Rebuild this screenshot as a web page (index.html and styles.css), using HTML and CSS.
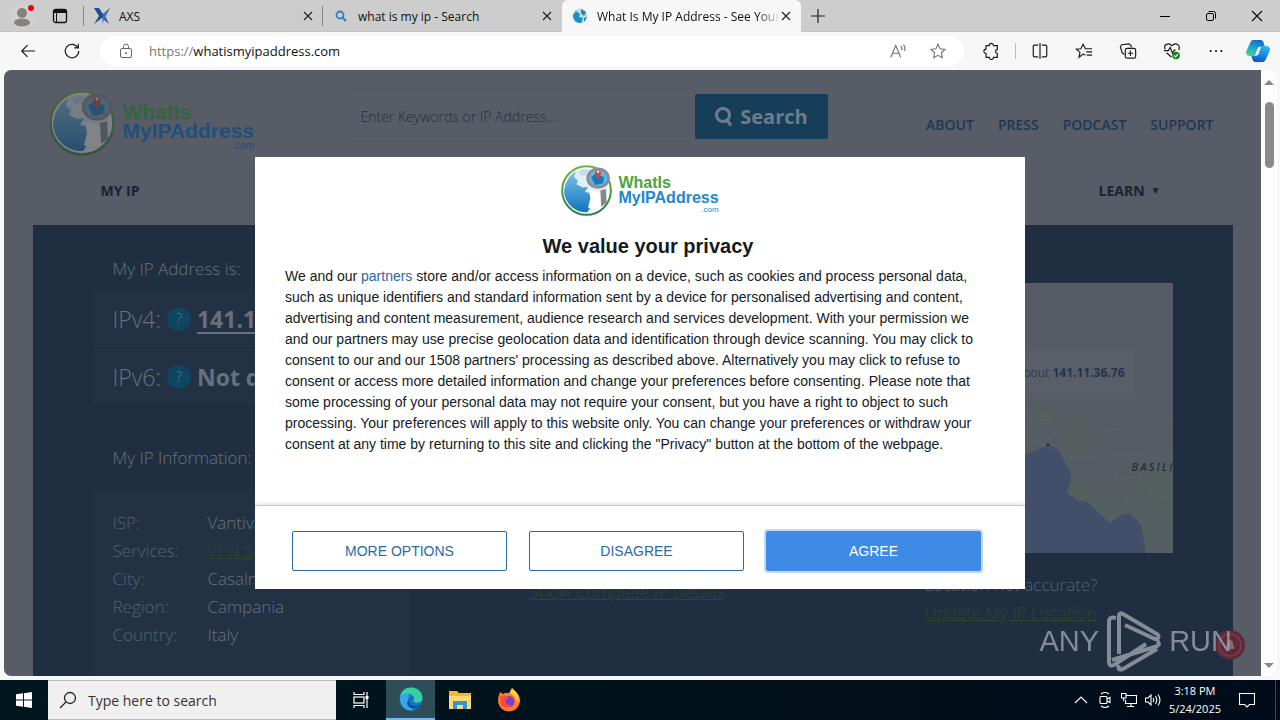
FILE: index.html
```
<!DOCTYPE html>
<html lang="en">
<head>
<meta charset="utf-8">
<title>What Is My IP Address</title>
<link rel="stylesheet" href="styles.css">
</head>
<body>
<svg class="defs" aria-hidden="true">
  <defs>
    <linearGradient id="sea" x1="0" y1="0" x2="0" y2="1"><stop offset="0" stop-color="#7cc4ec"/><stop offset="1" stop-color="#1272bd"/></linearGradient>
    <linearGradient id="ring" x1="0" y1="0" x2="0" y2="1"><stop offset="0" stop-color="#6cb83c"/><stop offset="1" stop-color="#2c8048"/></linearGradient>
    <symbol id="globe" viewBox="0 0 66 68">
      <circle cx="33" cy="34" r="31.5" fill="#fff" stroke="url(#ring)" stroke-width="2.6"/>
      <circle cx="32" cy="34" r="28" fill="#e2eff7"/>
      <path d="M6 25 12 15 19 9 17 17 22 21 20 26 28 30 35 29 31 36 36 37 42 41 38 50 38 56 34 62C17 63 4 49 4 34Z" fill="url(#sea)"/>
      <path d="M22 9 31 6 36 8 32 14 26 15Z" fill="#bddff0"/>
      <path d="M36 33 48 36 52 39 52 54 42 59 35 56 38 44Z" fill="#fff"/>
      <ellipse cx="48" cy="18" rx="13.5" ry="12" fill="#62b4e2" stroke="#8a8d94" stroke-width="3.5"/>
      <path d="M39 17 45 12 56 17 54 25 44 27Z" fill="#1a79bb"/>
      <path d="M48 20 44 12A4 4 0 1 1 52 12Z" fill="#dc4238"/><circle cx="48" cy="10" r="1.500" fill="#fff"/>
      <path d="M51 34 58 32 59 50 52 55Z" fill="#85878d"/>
    </symbol>
    <symbol id="close" viewBox="0 0 10 10"><path d="M1 1 9 9M9 1 1 9" fill="none" stroke="#222" stroke-width="1.200"/></symbol>
  </defs>
</svg>

<header class="tabstrip">
  <div class="tab-tools">
    <svg class="profile" viewBox="0 0 24 24"><circle cx="12" cy="12" r="12" fill="#d3d1cf"/><circle cx="12" cy="9" r="5" fill="#85817e"/><ellipse cx="12" cy="18.500" rx="8" ry="4" fill="#85817e"/><circle cx="21" cy="4" r="3" fill="#e30613"/></svg>
    <svg class="icon16" viewBox="0 0 16 16"><rect x="1.500" y="1.500" width="13" height="13" rx="2" fill="none" stroke="#111" stroke-width="1.300"/><path d="M1 2H15V5H1Z" fill="#111"/><path d="M4.500 4V14" stroke="#111"/></svg>
  </div>
  <div class="tab divided">
    <svg class="icon16" viewBox="0 0 16 16"><path d="M0 0H5L9 6 16 0 11 8 15 16 8 10 0 16 5 8Z" fill="#1d4f91"/><path d="M9 7 16 0 8 16Z" fill="#3b7cc4"/></svg>
    <span class="tab-title">AXS</span>
    <button class="tab-close" aria-label="Close tab"><svg viewBox="0 0 10 10"><use href="#close"/></svg></button>
  </div>
  <div class="tab">
    <svg class="icon16" viewBox="0 0 16 16"><circle cx="7" cy="7" r="3.500" fill="none" stroke="#2f7dc6" stroke-width="1.800"/><path d="M9.500 9.500 13 13" stroke="#2f7dc6" stroke-width="2"/></svg>
    <span class="tab-title">what is my ip - Search</span>
    <button class="tab-close" aria-label="Close tab"><svg viewBox="0 0 10 10"><use href="#close"/></svg></button>
  </div>
  <div class="tab active">
    <svg class="icon16" viewBox="0 0 16 16"><circle cx="8" cy="8" r="7.500" fill="#b9dced"/><path d="M1 7 4 3 8 6 7 9 11 10 9 15C4 15 1 12 1 7Z" fill="#1593c7"/><path d="M9 1 14 4 12 8 9 5ZM12 10 15 9 12 14Z" fill="#3a7b98"/></svg>
    <span class="tab-title fade">What Is My IP Address - See Your</span>
    <button class="tab-close" aria-label="Close tab"><svg viewBox="0 0 10 10"><use href="#close"/></svg></button>
  </div>
  <button class="new-tab" aria-label="New tab"><svg viewBox="0 0 14 14"><path d="M7 0V14M0 7H14" stroke="#222" stroke-width="1.200"/></svg></button>
  <div class="window-buttons">
    <button aria-label="Minimise"><svg viewBox="0 0 12 12"><path d="M1 6.500H11" stroke="#000"/></svg></button>
    <button aria-label="Restore"><svg viewBox="0 0 12 12" fill="none" stroke="#000"><rect x="1.500" y="3.500" width="7" height="7" rx="1.500"/><path d="M3.500 1.500H8.500Q10.500 1.500 10.500 3.500V8.500"/></svg></button>
    <button aria-label="Close"><svg viewBox="0 0 12 12"><path d="M1 1 11 11M11 1 1 11" stroke="#000" stroke-width="1.100"/></svg></button>
  </div>
</header>

<nav class="toolbar" aria-label="Browser toolbar">
  <button class="tool" aria-label="Back"><svg viewBox="0 0 20 20"><path d="M18 10H3M9.500 3.500 3 10 9.500 16.500"/></svg></button>
  <button class="tool" aria-label="Refresh"><svg viewBox="0 0 20 20"><path d="M16.300 6A7.500 7.500 0 1 0 17.500 10M17 2V6.500H12.500"/></svg></button>
  <div class="address">
    <svg class="lock" viewBox="0 0 16 16" fill="none" stroke="#666"><rect x="2.500" y="5.500" width="11" height="9" rx="1.500"/><path d="M5.500 5.500V3.500A2.500 2.500 0 0 1 10.500 3.500V5.500"/><circle cx="8" cy="10" r=".6" fill="#666"/></svg>
    <span class="url"><span class="scheme">https://</span>whatismyipaddress.com</span>
    <button class="tool grey" aria-label="Read aloud"><svg viewBox="0 0 20 20"><path d="M2 17 7.500 4 13 17M4 12.500H11M13 4Q15 6 14 9M16 3Q19 6 17 10"/></svg></button>
    <button class="tool grey" aria-label="Favourite"><svg viewBox="0 0 20 20"><path d="M10 2.500 12.300 7.500 17.700 8.200 13.800 12 14.700 17.400 10 14.800 5.300 17.400 6.200 12 2.300 8.200 7.700 7.500Z"/></svg></button>
  </div>
  <button class="tool" aria-label="Extensions"><svg viewBox="0 0 20 20"><path d="M4.500 4H8A2.400 2.400 0 0 1 12.800 4H17V8.500A2 2 0 0 0 17 12.500V17H12.800A2.400 2.400 0 0 1 8 17H4.500V12.800A2.400 2.400 0 0 1 4.500 8Z"/></svg></button>
  <span class="tool-divider"></span>
  <button class="tool" aria-label="Split screen"><svg viewBox="0 0 20 20"><path d="M8 3.500H4Q2.500 3.500 2.500 5V15Q2.500 16.500 4 16.500H8M12 3.500H16Q17.500 3.500 17.500 5V15Q17.500 16.500 16 16.500H12M10 1V19"/></svg></button>
  <button class="tool" aria-label="Favourites"><svg viewBox="0 0 20 20"><path d="M11.500 14.500 9 13.500 4.500 17 5.500 11.500 1.500 8 6.500 7.500 9 2.500 11.500 7.500H19M12.500 11H19M13 14.500H19"/></svg></button>
  <button class="tool" aria-label="Collections"><svg viewBox="0 0 20 20"><rect x="7" y="7" width="11.500" height="11" rx="2"/><path d="M12.700 9.500V15.500M9.700 12.500H15.700M6 14 3.500 12 1.500 5 3 3 11 2 13.500 4V6"/></svg></button>
  <button class="tool" aria-label="Browser essentials"><svg viewBox="0 0 20 20"><path d="M2.500 8C0 3 6 0 10 4 14 0 20 3 17.500 9M1 9.500H6L8 6 10.500 12.500 12.500 9H14M4 12 9.500 17"/><circle cx="14.500" cy="15" r="4.200" fill="#13801c" stroke="none"/><path d="M12.500 15 14 16.500 16.500 13.500" stroke="#fff"/></svg></button>
  <button class="tool" aria-label="Settings and more"><svg viewBox="0 0 20 20"><g fill="#111" stroke="none"><circle cx="4" cy="10" r="1.200"/><circle cx="10" cy="10" r="1.200"/><circle cx="16" cy="10" r="1.200"/></g></svg></button>
  <button class="tool copilot" aria-label="Copilot"><svg viewBox="0 0 24 24"><defs><linearGradient id="cp" x1=".6" y1="0" x2=".3" y2="1"><stop offset="0" stop-color="#1668c4"/><stop offset=".5" stop-color="#1fa9d0"/><stop offset="1" stop-color="#4bd07c"/></linearGradient><linearGradient id="cq" x1=".6" y1="0" x2=".4" y2="1"><stop offset="0" stop-color="#2fb3f0"/><stop offset=".6" stop-color="#1683e6"/><stop offset="1" stop-color="#1450c8"/></linearGradient></defs><path d="M7 1H15Q17 1 18 5L19 8H14Q12 8 11 11L9 17H4Q0 17 0 13L4 4Q5 1 7 1Z" fill="url(#cp)" stroke="none"/><path d="M17 23H9Q7 23 6 19L5.500 17H9Q12 17 13 13L15 7H20Q24 7 24 11L20 20Q19 23 17 23Z" fill="url(#cq)" stroke="none"/><path d="M12.500 8H15L12 16H9.500Z" fill="#eef8fc" stroke="none"/></svg></button>
</nav>

<div class="viewport">
  <div class="page">
    <div class="site">
      <div class="site-header">
        <div class="brand dim">
          <svg class="brand-globe" viewBox="0 0 66 68"><use href="#globe"/></svg>
          <div class="brand-text"><span class="green">WhatIs</span><span>MyIPAddress</span><small>.com</small></div>
        </div>
        <form class="search">
          <input type="text" aria-label="Keywords or IP address" placeholder="Enter Keywords or IP Address...">
          <button type="button"><svg viewBox="0 0 20 20"><circle cx="9" cy="8" r="6.500"/><path d="M12.500 12.500 17 18.500"/></svg>Search</button>
        </form>
        <nav class="site-links"><a href="#">ABOUT</a><a href="#">PRESS</a><a href="#">PODCAST</a><a href="#">SUPPORT</a></nav>
      </div>
      <nav class="menu"><a href="#">MY IP</a><span></span><a href="#">LEARN <i>▼</i></a></nav>
      <main class="hero">
        <section class="left">
          <h2>My IP Address is:</h2>
          <div class="ips">
            <div class="ip">IPv4: <span class="help">?</span> <a href="#">141.11.36.76</a></div>
            <div class="ip">IPv6: <span class="help">?</span> <b>Not detected</b></div>
          </div>
          <h2>My IP Information:</h2>
          <dl class="info">
            <dt>ISP:</dt><dd>Vantiva</dd>
            <dt>Services:</dt><dd><a href="#">VPN Server</a></dd>
            <dt>City:</dt><dd>Casalnuovo</dd>
            <dt>Region:</dt><dd>Campania</dd>
            <dt>Country:</dt><dd>Italy</dd>
          </dl>
        </section>
        <section class="middle"><a href="#">Show Complete IP Details</a></section>
        <section class="right">
          <div class="map">
            <svg viewBox="0 0 248 270" preserveAspectRatio="xMaxYMin slice">
              <defs><linearGradient id="land" x1="0" y1="0" x2="0" y2="1"><stop offset=".4" stop-color="#565b65"/><stop offset=".56" stop-color="#555d63"/><stop offset="1" stop-color="#535f60"/></linearGradient></defs>
              <rect width="248" height="270" fill="url(#land)"/>
              <path d="M100 131 110 125 121 127 130 133 124 142 104 140ZM143 136 156 134 168 146 160 168 146 178 138 165ZM210 188 226 192 240 186 248 196V240L236 226 224 206ZM144 200 158 204 170 218 184 238 160 222 142 212Z" fill="#54655a" opacity=".4"/>
              <path d="M70 170 100 172 122 163 132 165 145 188 146 198 142 210 154 218 162 219 185 240 197 232 205 230 216 242 221 270H60Z" fill="#414f6b"/>
              <path d="M100 155 116 160 127 166 145 174 161 172 188 188 205 225 222 250M132 165 147 148 168 138M161 172 176 150 206 142M145 174 220 172M190 128 202 123 220 133M230 125 248 140M185 200 225 190" fill="none" stroke="#5f5e69"/>
              <path d="M105 136 123 137 131 151 121 158M132 150 150 130M213 192 234 216 248 210" fill="none" stroke="#5a6563"/>
              <circle cx="123" cy="162" r="1.500" fill="#202936"/>
            </svg>
            <span class="region">BASILICATA</span>
            <div class="map-note">Click for more details about <b>141.11.36.76</b></div>
          </div>
          <p>Location not accurate?<br><a href="#">Update My IP Location</a></p>
        </section>
      </main>
    </div>
    <span class="alert-badge"><svg viewBox="0 0 32 32"><circle cx="16" cy="16" r="15" fill="#5c2a39"/><circle cx="16" cy="16" r="11" fill="none" stroke="#83394a" stroke-width="1.500"/><path d="M11 20Q13 17 13 14A3 3 0 0 1 19 14Q19 17 21 20Z" fill="#8f6470"/></svg></span>
    <div class="watermark"><span>ANY</span>
      <svg viewBox="0 0 54 62" fill="none"><path d="M12 44V6Q12 2 16 4L50 24Q53 27 50 29L48 29 18 15M5 50 51 36M51 36Q53 33 50 31M9 8Q2 6 2 12V52Q2 57 7 55L39 34M12 55Q10 61 16 59L50 39"/></svg>
      <span>RUN</span></div>
  </div>
  <div class="scrollbar"><i class="up"></i><i class="thumb"></i><i class="down"></i></div>

  <div class="overlay">
    <div class="dialog" role="dialog" aria-labelledby="privacy-title">
      <div class="brand small">
        <svg class="brand-globe" viewBox="0 0 66 68"><use href="#globe"/></svg>
        <div class="brand-text"><span class="green">WhatIs</span><span>MyIPAddress</span><small>.com</small></div>
      </div>
      <div class="dialog-body">
        <h1 id="privacy-title">We value your privacy</h1>
        <p>We and our <a href="#">partners</a> store and/or access information on a device, such as cookies and process personal data,<br>such as unique identifiers and standard information sent by a device for personalised advertising and content,<br>advertising and content measurement, audience research and services development. With your permission we<br>and our partners may use precise geolocation data and identification through device scanning. You may click to<br>consent to our and our 1508 partners' processing as described above. Alternatively you may click to refuse to<br>consent or access more detailed information and change your preferences before consenting. Please note that<br>some processing of your personal data may not require your consent, but you have a right to object to such<br>processing. Your preferences will apply to this website only. You can change your preferences or withdraw your<br>consent at any time by returning to this site and clicking the "Privacy" button at the bottom of the webpage.</p>
      </div>
      <div class="dialog-actions">
        <button>MORE OPTIONS</button><button>DISAGREE</button><button class="primary">AGREE</button>
      </div>
    </div>
  </div>
</div>

<footer class="taskbar">
  <button class="task start" aria-label="Start"><svg viewBox="0 0 16 16" fill="#fff"><path d="M0 2.300 7 1.300V7.600H0ZM8 1.200 16 0V7.600H8ZM0 8.400H7V14.700L0 13.700ZM8 8.400H16V16L8 14.800Z"/></svg></button>
  <label class="task-search"><svg viewBox="0 0 18 18" fill="none" stroke="#222" stroke-width="1.300"><circle cx="11" cy="7" r="5.500"/><path d="M7 11 1 17"/></svg><input type="text" aria-label="Search" placeholder="Type here to search"></label>
  <button class="task view" aria-label="Task view"><svg viewBox="0 0 16 16" fill="none" stroke="#fff" stroke-width="1.200"><path d="M1 0V2.500H11V0M1 16V13.500H11V16M14 0V16"/><rect x="1" y="5" width="10" height="6"/><path d="M12.500 5.500H15.500" stroke-width="3"/></svg></button>
  <button class="task running" aria-label="Edge"><svg class="app" viewBox="0 0 24 24"><circle cx="12" cy="12" r="11.500" fill="#0f74c4"/><path d="M1 10C2 3 8 0 13 .5 20 1 24 6 23.500 12 23 16 16 17 14 14 17 10 13 7 9 7 5 7 2 9 1 10Z" fill="#38cfa2"/><path d="M1 10C3 6 9 6 11 9 7 12 8 20 15 23 7 25 0 19 1 10Z" fill="#35a7ea"/><path d="M10 13C9 18 14 21 21 18 17 23 9 22 8 16Z" fill="#0b4a93"/></svg></button>
  <button class="task" aria-label="File Explorer"><svg class="app" viewBox="0 0 24 24"><path d="M1 3H9L11 5H23V21H1Z" fill="#f5b52e"/><path d="M1 8H23V21H1Z" fill="#ffd972"/><path d="M5 13H19V21H15V17H9V21H5Z" fill="#3592dd"/></svg></button>
  <button class="task" aria-label="Firefox"><svg class="app" viewBox="0 0 24 24"><path d="M3 4 6 6Q9 4 12 5L15 0Q17 4 20 5 24 9 23 14 21 23 12 23.500 3 23 1 14 1 8 3 4Z" fill="#ff7b29"/><path d="M15 0Q24 7 21 15L17 8 13 5Z" fill="#ffd13d"/><circle cx="12" cy="13.500" r="5.500" fill="#7b3fd0"/><path d="M3 8Q8 8 12 10 9 12 8 12 9 18 15 17 9 22 4 17Z" fill="#ff4a3d"/></svg></button>
  <div class="tray">
    <svg viewBox="0 0 16 16"><path d="M2 11 8 5 14 11"/></svg>
    <svg viewBox="0 0 16 16"><rect x="3" y="4.500" width="7" height="7" rx="1"/><path d="M10 7 13 5.500V10.500L10 9M4 2Q8-1 12 2M4 14Q8 17 12 14"/></svg>
    <svg viewBox="0 0 16 16"><path d="M5 3.500H15.500V11.500H4.500V8M10 11.500V14.500M6 14.500H13M.5 1.500H5V6H.5ZM2.700 6V9"/></svg>
    <svg viewBox="0 0 16 16"><path d="M.5 6H3L6 3V13L3 10H.5ZM8 6Q9.500 8 8 10M10.500 4Q13 8 10.500 12M13 2.500Q17 8 13 13.500"/></svg>
    <div class="clock">3:18 PM<br>5/24/2025</div>
    <svg class="notify" viewBox="0 0 16 16"><path d="M.5 1.500H15.500V12.500H10.500L8 15 5.500 12.500H.5Z"/></svg>
    <span class="peek"></span>
  </div>
</footer>
</body>
</html>
```
FILE: styles.css
```
* { box-sizing: border-box; }
body { margin: 0; height: 100vh; display: flex; flex-direction: column; overflow: hidden; background: #f7f7f7; font-family: "Open Sans", "Noto Sans", sans-serif; font-size: 12px; color: #111; }
button { border: 0; padding: 0; background: none; font: inherit; color: inherit; display: flex; align-items: center; justify-content: center; }
input { font: inherit; border: 0; background: none; padding: 0; min-width: 0; }
h1, h2, p, dl, dd { margin: 0; }
svg { display: block; flex: none; }
.defs { position: absolute; width: 0; height: 0; }

/* Browser tabs */
.tabstrip { flex: none; height: 32px; display: flex; background: #cdcdcd; border-bottom: 1px solid #c4c4c4; }
.tab-tools { width: 84px; display: flex; align-items: center; gap: 18px; padding-left: 10px; }
.tab-tools, .tab.divided { background: linear-gradient(#888, #888) right center / 1px 20px no-repeat; }
.profile { width: 24px; height: 24px; }
.icon16 { width: 16px; height: 16px; }
.tab { flex: 0 1 239px; min-width: 0; height: 32px; display: flex; align-items: center; gap: 9px; padding: 0 10px; }
.tab.active { background: #f7f7f7; border-radius: 6px 6px 0 0; }
.tab.active .tab-close { margin-left: -8px; }
.tab-title { flex: 1; min-width: 0; overflow: hidden; white-space: nowrap; }
.tab-title.fade { -webkit-mask-image: linear-gradient(90deg, #000 88%, transparent); mask-image: linear-gradient(90deg, #000 88%, transparent); }
.tab-close svg { width: 10px; height: 10px; }
.new-tab { width: 34px; }
.new-tab svg { width: 14px; height: 14px; }
.window-buttons { margin-left: auto; display: flex; }
.window-buttons button { width: 46px; }
.window-buttons svg { width: 12px; height: 12px; }

/* Browser toolbar */
.toolbar { flex: none; height: 38px; display: flex; align-items: center; padding: 0 2px 0 6px; }
.tool { width: 44px; height: 30px; }
.tool svg { width: 18px; height: 18px; fill: none; stroke: #1a1a1a; stroke-width: 1.3; }
.tool.grey { width: 40px; }
.tool.grey svg { stroke: #777; }
.tool.copilot { width: 40px; }
.tool.copilot svg { width: 24px; height: 24px; }
.tool-divider { width: 1px; height: 16px; margin: 0 2px; background: #bbb; }
.address { flex: 1; height: 30px; margin: 0 5px 0 6px; padding: 0 6px 0 18px; display: flex; align-items: center; border-radius: 15px; background: #fff; }
.lock { width: 16px; height: 16px; }
.url { flex: 1; margin-left: 15px; font-size: 13px; }
.scheme { color: #777; }

/* Page area */
.viewport { flex: 1; min-height: 0; display: flex; position: relative; margin: 0 3px 4px 4px; border-radius: 7px; overflow: hidden; background: #fdfdfd; }
.page { flex: 1; min-width: 0; position: relative; overflow: hidden; background: #575c66; }
.site { max-width: 1200px; margin: 0 auto; }
.site-header { height: 95px; display: flex; padding: 0 19px 0 16px; }
.brand { display: flex; font-family: "Liberation Sans", sans-serif; font-weight: 700; font-size: 21px; line-height: 19px; color: #2088cf; }
.brand-globe { width: 66px; height: 68px; }
.brand-text { display: flex; flex-direction: column; padding: 13px 0 0 8px; }
.brand-text small { align-self: flex-end; font-size: 10px; line-height: 12px; font-weight: 400; }
.green { color: #4aa53c; }
.brand.dim { width: 300px; padding-top: 19px; }
.brand.dim .brand-globe { filter: brightness(.62); opacity: .6; }
.brand.dim .brand-text { color: #214f7c; }
.brand.dim .green { color: #32663c; }
.search { width: 479px; height: 45px; margin-top: 24px; display: flex; }
.search input { flex: 1; padding: 0 11px; border: 1px solid #5a5f69; font-size: 14px; font-weight: 300; color: #282e37; }
.search input::placeholder { color: #282e37; opacity: 1; }
.search button { width: 133px; gap: 6px; border-radius: 2px; background: #173e59; color: #6d7c8b; font-size: 20px; font-weight: 700; }
.search button svg { width: 20px; height: 20px; fill: none; stroke: #6d7c8b; stroke-width: 3; }
.site-links { margin: 44px 0 0 auto; display: flex; gap: 24px; font-size: 14px; line-height: 22px; font-weight: 600; }
.site-links a { color: #1f3756; text-decoration: none; }
.menu { height: 60px; display: grid; grid-template-columns: 175px 1fr 206px; border-top: 1px solid #595e68; }
.menu a { display: flex; align-items: center; justify-content: center; gap: 6px; padding-bottom: 11px; font-size: 14px; font-weight: 700; color: #1b2230; text-decoration: none; }
.menu span { border: solid #5b606a; border-width: 0 1px; }
.menu i { font-size: 10px; font-style: normal; }

.hero { min-height: 460px; display: grid; grid-template-columns: 317px 1fr 248px; padding: 0 60px; background: #1f2f41; color: #56616f; font-size: 17px; font-weight: 300; }
.hero a { color: #31452f; }
.left h2 { padding: 32px 20px 9px; font-size: 17px; line-height: 24px; font-weight: 300; color: #66717e; white-space: nowrap; }
.ips { background: #223244; }
.ip { height: 57px; display: flex; align-items: center; gap: 6px; padding-left: 20px; font-size: 23px; white-space: nowrap; overflow: hidden; color: #66717e; }
.ip + .ip { border-top: 2px solid #1f2f41; }
.hero .ip a, .ip b { font-weight: 700; color: #66717e; text-underline-offset: 4px; text-decoration-thickness: 2px; }
.help { width: 24px; height: 24px; border-radius: 50%; background: #104560; color: #52788a; font-size: 14px; line-height: 24px; text-align: center; }
.ips + h2 { padding: 42px 20px 20px; }
.info { display: grid; grid-template-columns: 95px 1fr; align-content: start; min-height: 200px; padding: 19px 20px; background: #223244; line-height: 28px; }
.info dd { color: #66717e; white-space: nowrap; }
.middle { padding: 355px 0 0 120px; line-height: 24px; }
.map { position: relative; height: 270px; margin-top: 58px; overflow: hidden; }
.map svg { width: 100%; height: 100%; }
.map-note { position: absolute; right: 39px; top: 66px; height: 49px; padding: 0 9px; line-height: 48px; font-size: 12px; font-weight: 400; white-space: nowrap; background: #595e68; color: #2d3d55; }
.map-note b { color: #21354f; }
.region { position: absolute; left: 207px; top: 176px; font-size: 11px; line-height: 16px; font-style: italic; font-weight: 600; letter-spacing: 2px; color: #282f36; }
.right p { padding-top: 18px; line-height: 28px; white-space: nowrap; }
.alert-badge { position: absolute; right: 15px; bottom: 15px; }
.alert-badge svg { width: 32px; height: 32px; }
.watermark { position: absolute; right: 29px; bottom: 4px; display: flex; align-items: center; gap: 8px; font-family: "Liberation Sans", sans-serif; font-size: 29px; color: #959da7; opacity: .85; }
.watermark svg { width: 54px; height: 62px; stroke: #959da7; stroke-width: 4; }

.scrollbar { width: 16px; display: flex; flex-direction: column; align-items: center; padding: 10px 0 8px; }
.up, .down { border: solid transparent; border-width: 0 5px; }
.up { border-bottom: 5px solid #888; }
.down { margin-top: auto; border-top: 5px solid #888; }
.thumb { width: 9px; height: 66px; margin-top: 17px; border-radius: 5px; background: #8a8a8a; }

/* Consent dialog */
.overlay { position: absolute; inset: 0; display: flex; align-items: center; justify-content: center; padding-right: 1px; }
.dialog { width: 770px; max-width: 100%; min-height: 432px; overflow: hidden; display: flex; flex-direction: column; background: #fff; font-family: "Liberation Sans", sans-serif; color: #141a1e; }
.brand.small { align-self: center; padding-top: 7px; font-size: 16px; line-height: 15px; }
.small .brand-globe { width: 51px; height: 53px; }
.small .brand-text { padding: 11px 0 0 6px; }
.small small { font-size: 8px; line-height: 9px; }
.dialog-body { flex: 1; padding: 17px 14px 0 30px; }
.dialog h1 { font-size: 20px; line-height: 24px; text-align: center; }
.dialog p { margin-top: 8px; font-size: 14px; line-height: 21px; white-space: nowrap; }
.dialog p a { color: #2b68a8; text-decoration: none; }
.dialog-actions { display: grid; grid-template-columns: repeat(3, 1fr); gap: 22px; padding: 25px 44px 18px 37px; border-top: 1px solid #ccc; box-shadow: 0 -2px 3px #e8e8e8; }
.dialog-actions button { height: 40px; border: 1px solid #2b68a8; border-radius: 2px; font-size: 14px; color: #2b68a8; }
.dialog-actions .primary { background: #3e8ae4; border-color: #3e8ae4; color: #fff; box-shadow: 0 0 0 2px #c3daf5; }

/* Taskbar */
.taskbar { flex: none; height: 40px; display: flex; background: linear-gradient(90deg, #00171f, #001019 60%, #000b1b); color: #fff; }
.task { width: 49px; }
.task.start { width: 48px; }
.task.view { width: 50px; }
.task svg { width: 16px; height: 16px; }
.task svg.app { width: 24px; height: 24px; }
.task.running { background: #2f4d58; border-bottom: 2px solid #76b9ed; }
.task-search { width: 288px; display: flex; align-items: center; gap: 11px; padding-left: 11px; background: #f0f0f0; border: 1px solid #bbb; border-width: 1px 0; }
.task-search svg { width: 18px; height: 18px; }
.task-search input { flex: 1; font-size: 14px; }
.task-search input::placeholder { color: #333; opacity: 1; }
.tray { margin-left: auto; display: flex; align-items: center; gap: 8px; }
.tray svg { width: 16px; height: 16px; fill: none; stroke: #fff; stroke-width: 1.1; }
.clock { font-size: 11px; line-height: 18px; text-align: center; white-space: nowrap; }
.tray .notify { margin-left: 10px; }
.peek { width: 5px; height: 40px; margin-left: 12px; border-left: 1px solid #3c4650; }
```
